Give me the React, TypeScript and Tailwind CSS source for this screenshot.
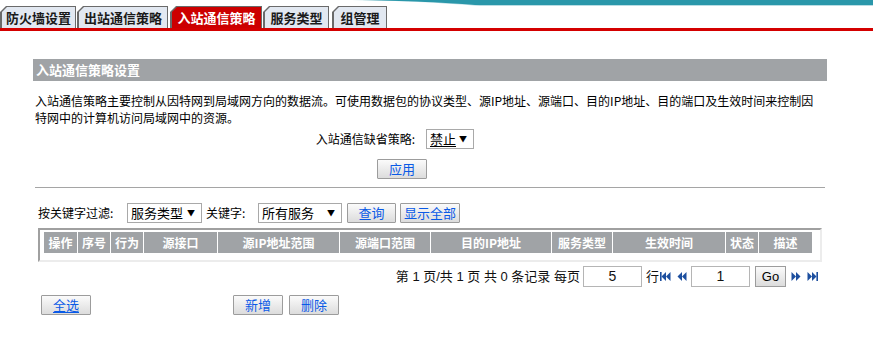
import React from "react";

const Tab = ({ label, w, active }: { label: string; w: string; active?: boolean }) => (
  <div className={`relative h-[22px] ${w} shrink-0`}>
    <div className="absolute inset-0 bg-[#6a6a6a] [clip-path:polygon(6px_0,100%_0,100%_100%,0_100%,0_6px)]" />
    <div
      className={`absolute left-[2px] top-[1px] right-[1px] bottom-0 [clip-path:polygon(5px_0,100%_0,100%_100%,0_100%,0_5px)] flex items-center justify-center pt-[1px] font-bold text-[13px] ${
        active ? "bg-[#cc0000] text-white" : "bg-[#e2e8f1] text-[#1a1a1a]"
      }`}
    >
      {label}
    </div>
  </div>
);

const Btn = ({ label, w, underline, cls = "" }: { label: string; w: string; underline?: boolean; cls?: string }) => (
  <div
    className={`${w} h-[20px] shrink-0 border border-[#9c9c9c] rounded-[1px] bg-gradient-to-b from-[#fbfbfb] to-[#dcdcdc] flex items-center justify-center text-[13px] text-[#0a5ae6] ${cls}`}
  >
    <span className={underline ? "underline underline-offset-[2px]" : ""}>{label}</span>
  </div>
);

const Sel = ({ label, w, underline, cls = "" }: { label: string; w: string; underline?: boolean; cls?: string }) => (
  <div
    className={`${w} h-[20px] shrink-0 border border-[#a9a9a9] bg-white flex items-center justify-between pl-[3px] pr-[6px] text-[13px] text-black ${cls}`}
  >
    <span className={underline ? "underline underline-offset-[2px]" : ""}>{label}</span>
    <span className="text-[8px] leading-none">▼</span>
  </div>
);

const cols: [string, string][] = [
  ["操作", "w-[33px]"],
  ["序号", "w-[33px]"],
  ["行为", "w-[33px]"],
  ["源接口", "w-[74px]"],
  ["源IP地址范围", "w-[122px]"],
  ["源端口范围", "w-[91px]"],
  ["目的IP地址", "w-[121px]"],
  ["服务类型", "w-[61px]"],
  ["生效时间", "w-[113px]"],
  ["状态", "w-[33px]"],
  ["描述", "w-[54px]"],
];

const Arrow = ({ dir, bar }: { dir: "l" | "r"; bar?: boolean }) => (
  <svg width="11" height="9" viewBox="0 0 11 9" className="shrink-0">
    {dir === "l" ? (
      <g fill="#1d4f9f">
        {bar && <rect x="0" y="0" width="1.6" height="9" />}
        <polygon points="6,0 6,9 1.5,4.5" />
        <polygon points="10.5,0 10.5,9 6,4.5" />
      </g>
    ) : (
      <g fill="#1d4f9f">
        <polygon points="0.5,0 0.5,9 5,4.5" />
        <polygon points="5,0 5,9 9.5,4.5" />
        {bar && <rect x="9.4" y="0" width="1.6" height="9" />}
      </g>
    )}
  </svg>
);

export default function App() {
  return (
    <div className="w-[873px] h-[345px] bg-white overflow-hidden text-[12px] text-black font-['Noto_Sans_CJK_SC',sans-serif]">
      <svg width="873" height="6" viewBox="0 0 873 6" className="block">
        <path d="M330,0 C390,0 430,2 480,6 L873,6 L873,0 Z" fill="#b9dde4" />
        <path d="M330,0 C390,0 430,1.5 475,5 L873,5 L873,0 Z" fill="#2a97aa" />
      </svg>
      <div className="flex h-[22px] items-end">
        <Tab label="防火墙设置" w="w-[76px]" />
        <div className="w-[1px]" />
        <Tab label="出站通信策略" w="w-[91px]" />
        <div className="w-[2px]" />
        <Tab label="入站通信策略" w="w-[92px]" active />
        <div className="w-[1px]" />
        <Tab label="服务类型" w="w-[66px]" />
        <div className="w-[3px]" />
        <Tab label="组管理" w="w-[55px]" />
      </div>
      <div className="h-[3px] bg-[#d40000]" />

      <div className="ml-[33px] w-[794px] mt-[28px]">
        <div className="h-[22px] bg-[#a0a3a6] text-white font-bold text-[13px] flex items-center pl-[3px]">
          入站通信策略设置
        </div>
        <div className="mt-[11px] pl-[2px] leading-[17px] text-[12px]">
          入站通信策略主要控制从因特网到局域网方向的数据流。可使用数据包的协议类型、源IP地址、源端口、目的IP地址、目的端口及生效时间来控制因
          <br />
          特网中的计算机访问局域网中的资源。
        </div>
        <div className="mt-[3px] flex items-center h-[20px]">
          <div className="w-[382px] text-right">入站通信缺省策略:</div>
          <Sel label="禁止" w="w-[48px]" underline cls="ml-[11px]" />
        </div>
        <div className="mt-[10px] flex">
          <Btn label="应用" w="w-[50px]" cls="ml-[344px]" />
        </div>
        <div className="mt-[8px] ml-[2px] w-[790px] border-t border-[#a5a5a5]" />
        <div className="mt-[15px] flex items-center h-[20px] pl-[5px]">
          <div className="w-[89px]">按关键字过滤:</div>
          <Sel label="服务类型" w="w-[75px]" />
          <div className="w-[56px] pl-[4px]">关键字:</div>
          <Sel label="所有服务" w="w-[84px]" />
          <Btn label="查询" w="w-[49px]" cls="ml-[5px]" />
          <Btn label="显示全部" w="w-[60px]" cls="ml-[4px]" />
        </div>
      </div>

      <div className="ml-[38px] w-[784px] mt-[5px] border-t-2 border-l-2 border-t-[#a0a0a0] border-l-[#a0a0a0] border-r-2 border-b-2 border-r-[#ececec] border-b-[#ececec] pl-[4px] pt-[2px] pb-[7px]">
        <div className="flex w-[768px] h-[21px] bg-[#a0a3a6]">
          {cols.map(([t, w], i) => (
            <div
              key={t}
              className={`${w} shrink-0 flex items-center justify-center text-white font-bold text-[12px] ${
                i > 0 ? "border-l border-white" : ""
              }`}
            >
              {t}
            </div>
          ))}
        </div>
      </div>

      <div className="mt-[4px] w-[822px] flex justify-end items-center h-[21px] gap-0 text-[13px] text-[#111] font-['Liberation_Sans','Noto_Sans_CJK_SC',sans-serif] pr-[4px]">
        <span className="whitespace-pre">第 1 页/共 1 页 共 0 条记录 每页</span>
        <div className="ml-[3px] w-[59px] h-[21px] border border-[#b5b5b5] flex items-center justify-center text-[14px]">5</div>
        <span className="ml-[4px]">行</span>
        <div className="ml-[1px]"><Arrow dir="l" bar /></div>
        <div className="ml-[5px]"><Arrow dir="l" /></div>
        <div className="ml-[4px] w-[59px] h-[21px] border border-[#b5b5b5] flex items-center justify-center text-[14px]">1</div>
        <div className="ml-[5px] w-[31px] h-[21px] border border-[#9c9c9c] bg-gradient-to-b from-[#fbfbfb] to-[#dcdcdc] flex items-center justify-center text-[13px] text-black">Go</div>
        <div className="ml-[5px]"><Arrow dir="r" /></div>
        <div className="ml-[5px]"><Arrow dir="r" bar /></div>
      </div>

      <div className="mt-[8px] flex">
        <Btn label="全选" w="w-[50px]" underline cls="ml-[41px]" />
        <Btn label="新增" w="w-[50px]" cls="ml-[142px]" />
        <Btn label="删除" w="w-[50px]" cls="ml-[6px]" />
      </div>
    </div>
  );
}
